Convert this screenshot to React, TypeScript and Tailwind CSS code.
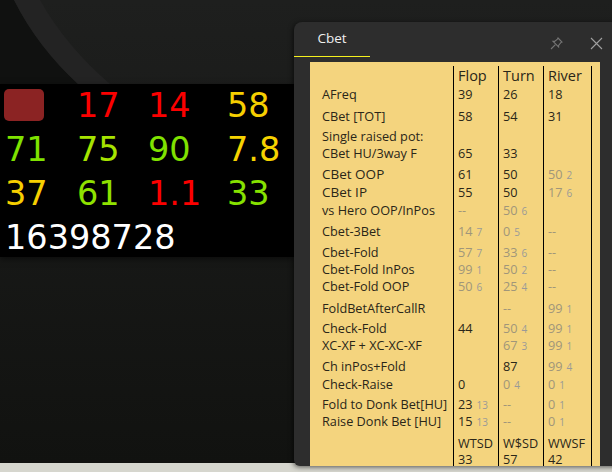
const hud: [string, string][][] = [
  [["", ""], ["17", "text-[#fb0000]"], ["14", "text-[#fb0000]"], ["58", "text-[#f6cf00]"]],
  [["71", "text-[#7fe200]"], ["75", "text-[#a6e400]"], ["90", "text-[#80e200]"], ["7.8", "text-[#f6d300]"]],
  [["37", "text-[#f6cf00]"], ["61", "text-[#8fe200]"], ["1.1", "text-[#fb0000]"], ["33", "text-[#86e200]"]],
];

type Cell = [string, string?] | null;
type Row = { h: number; label: string; big?: boolean; c: Cell[] };

const rows: Row[] = [
  { h: 20, label: "", c: [] },
  { h: 22, label: "AFreq", c: [["39"], ["26"], ["18"]] },
  { h: 20, label: "CBet [TOT]", c: [["58"], ["54"], ["31"]] },
  { h: 17, label: "Single raised pot:", c: [null, null, null] },
  { h: 21, label: "CBet HU/3way F", c: [["65"], ["33"], null] },
  { h: 18, label: "CBet OOP", big: true, c: [["61"], ["50"], ["50", "2"]] },
  { h: 18, label: "CBet IP", big: true, c: [["55"], ["50"], ["17", "6"]] },
  { h: 21, label: "vs Hero OOP/InPos", c: [["--", ""], ["50", "6"], null] },
  { h: 21, label: "Cbet-3Bet", c: [["14", "7"], ["0", "5"], ["--", ""]] },
  { h: 17, label: "Cbet-Fold", c: [["57", "7"], ["33", "6"], ["--", ""]] },
  { h: 17, label: "Cbet-Fold InPos", c: [["99", "1"], ["50", "2"], ["--", ""]] },
  { h: 22, label: "Cbet-Fold OOP", c: [["50", "6"], ["25", "4"], ["--", ""]] },
  { h: 20, label: "FoldBetAfterCallR", c: [null, ["--", ""], ["99", "1"]] },
  { h: 17, label: "Check-Fold", c: [["44"], ["50", "4"], ["99", "1"]] },
  { h: 21, label: "XC-XF + XC-XC-XF", c: [null, ["67", "3"], ["99", "1"]] },
  { h: 18, label: "Ch inPos+Fold", c: [null, ["87"], ["99", "4"]] },
  { h: 20, label: "Check-Raise", c: [["0"], ["0", "4"], ["0", "1"]] },
  { h: 17, label: "Fold to Donk Bet[HU]", c: [["23", "13!"], ["--", ""], ["0", "1"]] },
  { h: 22, label: "Raise Donk Bet [HU]", c: [["15", "13!"], ["--", ""], ["0", "1"]] },
];

function Val({ c }: { c: Cell }) {
  if (!c) return null;
  if (c[1] === undefined) return <span className="text-[#2a2618]">{c[0]}</span>;
  const strong = c[1].endsWith("!");
  return (
    <span className={strong ? "text-[#2a2618]" : "text-[#a0967a]"}>
      {c[0]}
      {c[1] && <span className="ml-[4px] text-[10px] text-[#9a9a98]">{c[1].replace("!", "")}</span>}
    </span>
  );
}

const colBase = "shrink-0 border-l border-black pl-[4px] whitespace-nowrap";
const widths = ["w-[45px]", "w-[45px]", "w-[48px]"];

export default function App() {
  return (
    <div className="relative h-[472px] w-[612px] overflow-hidden bg-[#d6d6ce] [font-family:'Open_Sans','Noto_Sans',sans-serif]">
      <div className="relative h-[463px] w-full bg-gradient-to-b from-[#1e1f1e] to-[#111210]">
        <svg className="absolute left-0 top-0" width="300" height="90" viewBox="0 0 300 90">
          <path d="M0 0 L14 0 C30 32 52 60 78 84 L0 84 Z" fill="#101110" />
          <path d="M14 0 L40 0 C58 32 82 60 110 84 L78 84 C52 60 30 32 14 0 Z" fill="#232323" />
        </svg>
        <div className="absolute left-0 top-[84px] flex h-[173px] w-[294px] flex-col bg-black pl-[5px] [font-family:'DejaVu_Sans',sans-serif] text-[33.5px] leading-[44px] shadow-[0_2px_6px_rgba(0,0,0,0.5)]">
          {hud.map((r, i) => (
            <div key={i} className="grid h-[44px] grid-cols-[72px_71px_79px_60px]">
              {r.map(([t, cl], j) =>
                i === 0 && j === 0 ? (
                  <div key={j} className="mt-[5px] h-[32px] w-[40px] -translate-x-[1px] rounded-[5px] bg-[#8b2323]" />
                ) : (
                  <span key={j} className={cl}>{t}</span>
                )
              )}
            </div>
          ))}
          <div className="text-white">16398728</div>
        </div>
      </div>

      <div className="absolute left-[294px] top-[22px] flex h-[444px] w-[330px] flex-col rounded-tl-[8px] rounded-bl-[6px] bg-[#2d2d2d] shadow-[-1px_1px_5px_rgba(0,0,0,0.6)]">
        <div className="relative h-[36px] shrink-0">
          <div className="flex h-[35px] w-[76px] items-center justify-center border-b border-[#f5f01e] pb-[2px] text-[13.5px] text-[#f0f0f0]">Cbet</div>
          <svg className="absolute left-[256px] top-[15px]" width="13" height="13" viewBox="0 0 13 13" fill="none" stroke="#757575" strokeWidth="1.1">
            <path d="M8 1 L12 5 L10.8 5.6 L8.6 8.4 L8.6 10 L3 4.4 L4.6 4.4 L7.4 2.2 Z" />
            <path d="M5.4 7.6 L1 12" />
          </svg>
          <svg className="absolute left-[296px] top-[15px]" width="13" height="13" viewBox="0 0 13 13" fill="none" stroke="#a0a0a0" strokeWidth="1.1">
            <path d="M1 1 L12 12 M12 1 L1 12" />
          </svg>
        </div>
        <div className="ml-[16px] mt-[4px] min-h-0 w-[290px] flex-1 overflow-hidden bg-[#f4d47e] pt-[4px] text-[12.7px] leading-[16px] text-[#2a2618]">
          <Grid />
        </div>
      </div>
    </div>
  );
}

function Grid() {
  const foot = [["WTSD", "33"], ["W$SD", "57"], ["WWSF", "42"]];
  const head = ["Flop", "Turn", "River"];
  return (
    <div>
      {rows.map((r, i) => (
        <div key={i} style={{ height: r.h }} className="flex overflow-hidden">
          <div className={`w-[143px] shrink-0 pl-[12px] whitespace-nowrap ${r.big ? "text-[13.5px]" : ""}`}>{r.label}</div>
          {i === 0
            ? head.map((h, j) => (
                <div key={h} className={`${colBase} ${widths[j]} pl-[4px] text-[14.5px] leading-[20px]`}>{h}</div>
              ))
            : r.c.map((c, j) => (
                <div key={j} className={`${colBase} ${widths[j]}`}><Val c={c} /></div>
              ))}
          <div className="border-l border-black" />
        </div>
      ))}
      <div className="flex h-[36px]">
        <div className="w-[143px] shrink-0" />
        {foot.map(([a, b], j) => (
          <div key={a} className={`${colBase} ${widths[j]}`}>
            <div className="h-[16px]">{a}</div>
            <div className="mt-[1px] leading-[14px]">{b}</div>
          </div>
        ))}
        <div className="border-l border-black" />
      </div>
    </div>
  );
}
